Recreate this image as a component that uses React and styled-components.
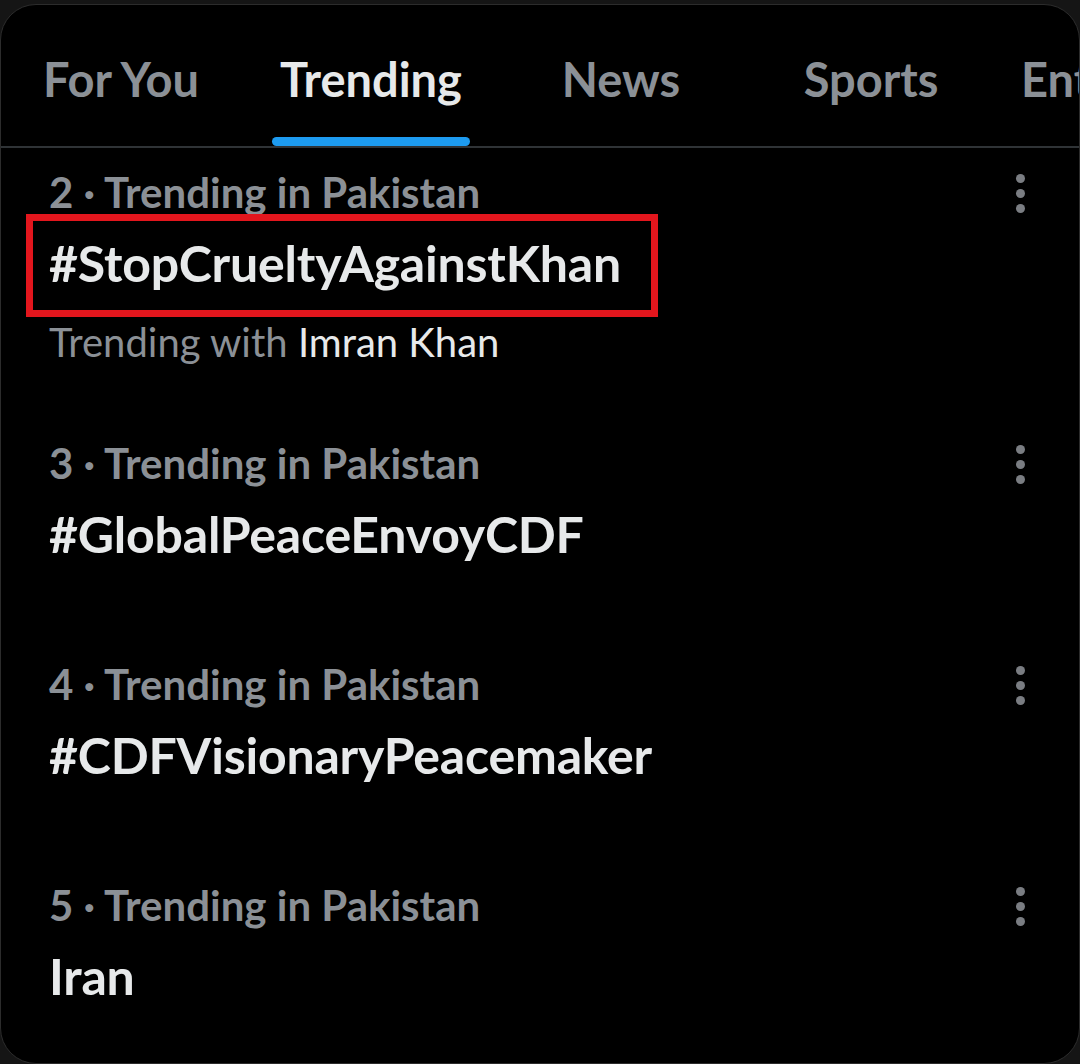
import React from 'react';
import styled, {createGlobalStyle} from 'styled-components';

const GlobalStyle = createGlobalStyle`
  html, body {
    margin: 0;
    padding: 0;
    background: #151515;
  }
  body {
    font-family: Lato, "Open Sans", "Liberation Sans", sans-serif;
    -webkit-font-smoothing: antialiased;
  }
`;

const Card = styled.div`
  box-sizing: border-box;
  width: 1080px;
  height: 1060px;
  margin-top: 4px;
  background: #000;
  border: 1px solid #2c2c2c;
  border-radius: 36px;
  overflow: hidden;
`;

const TabBar = styled.div`
  display: flex;
  height: 141px;
  margin-left: -5px;
  border-bottom: 2px solid #2f3336;
  overflow: hidden;
  white-space: nowrap;
`;

/* tabs share one width with the label centred; the last one runs off the edge */
const Tab = styled.div`
  flex: none;
  box-sizing: border-box;
  display: flex;
  flex-direction: column;
  justify-content: flex-end;
  align-items: ${p => (p.last ? 'flex-start' : 'center')};
  width: ${p => (p.last ? 'auto' : '250px')};
  padding-left: ${p => (p.last ? '25px' : '0')};
`;

const TabLabel = styled.div`
  font-size: 47px;
  font-weight: 700;
  line-height: 50px;
  color: ${p => (p.active ? '#e7e9ea' : '#8b9096')};
  padding-bottom: ${p => (p.active ? '33px' : '42px')};
`;

const Indicator = styled.div`
  align-self: stretch;
  height: 9px;
  margin: 0 26px;
  border-radius: 5px;
  background: #1d9bf0;
`;

const Item = styled.div`
  box-sizing: border-box;
  min-height: 221px;
  padding: 22px 0 55px 48px;
  display: flex;
  align-items: flex-start;
`;

const ItemBody = styled.div`
  flex: 1;
  display: flex;
  flex-direction: column;
  align-items: flex-start;
`;

const Meta = styled.div`
  font-size: 42px;
  font-weight: 700;
  line-height: 44px;
  color: #8b9096;
`;

const Tag = styled.div`
  position: relative;
  margin-top: 25px;
  font-size: 50px;
  font-weight: 700;
  line-height: 48px;
  color: #e7e9ea;
  letter-spacing: -0.2px;

  ${p => p.marked && `
    &::after {
      content: "";
      position: absolute;
      top: -25px;
      bottom: -30px;
      left: -23px;
      right: -37px;
      border: 7px solid #e3161d;
    }
  `}
`;

const Sub = styled.div`
  margin-top: 33px;
  font-size: 40px;
  font-weight: 400;
  line-height: 44px;
  color: #8b9096;

  span {
    color: #e7e9ea;
  }
`;

const More = styled.div`
  display: flex;
  flex-direction: column;
  gap: 6px;
  padding: 4px 54px 0 0;

  i {
    display: block;
    width: 9px;
    height: 9px;
    border-radius: 50%;
    background: #7a7d82;
  }
`;

const tabs = [
  {label: 'For You'},
  {label: 'Trending', active: true},
  {label: 'News'},
  {label: 'Sports'},
  {label: 'Entertainment'},
];

const trends = [
  {rank: 2, tag: '#StopCrueltyAgainstKhan', marked: true, with: 'Imran Khan'},
  {rank: 3, tag: '#GlobalPeaceEnvoyCDF'},
  {rank: 4, tag: '#CDFVisionaryPeacemaker'},
  {rank: 5, tag: 'Iran'},
];

export default function App() {
  return (
    <>
      <GlobalStyle/>
      <Card>
        <TabBar>
          {tabs.map((t, i) => (
            <Tab key={i} last={i === tabs.length - 1}>
              <TabLabel active={t.active}>{t.label}</TabLabel>
              {t.active && <Indicator/>}
            </Tab>
          ))}
        </TabBar>
        {trends.map(t => (
          <Item key={t.rank}>
            <ItemBody>
              <Meta>{t.rank} · Trending in Pakistan</Meta>
              <Tag marked={t.marked}>{t.tag}</Tag>
              {t.with && <Sub>Trending with <span>{t.with}</span></Sub>}
            </ItemBody>
            <More><i/><i/><i/></More>
          </Item>
        ))}
      </Card>
    </>
  );
}
